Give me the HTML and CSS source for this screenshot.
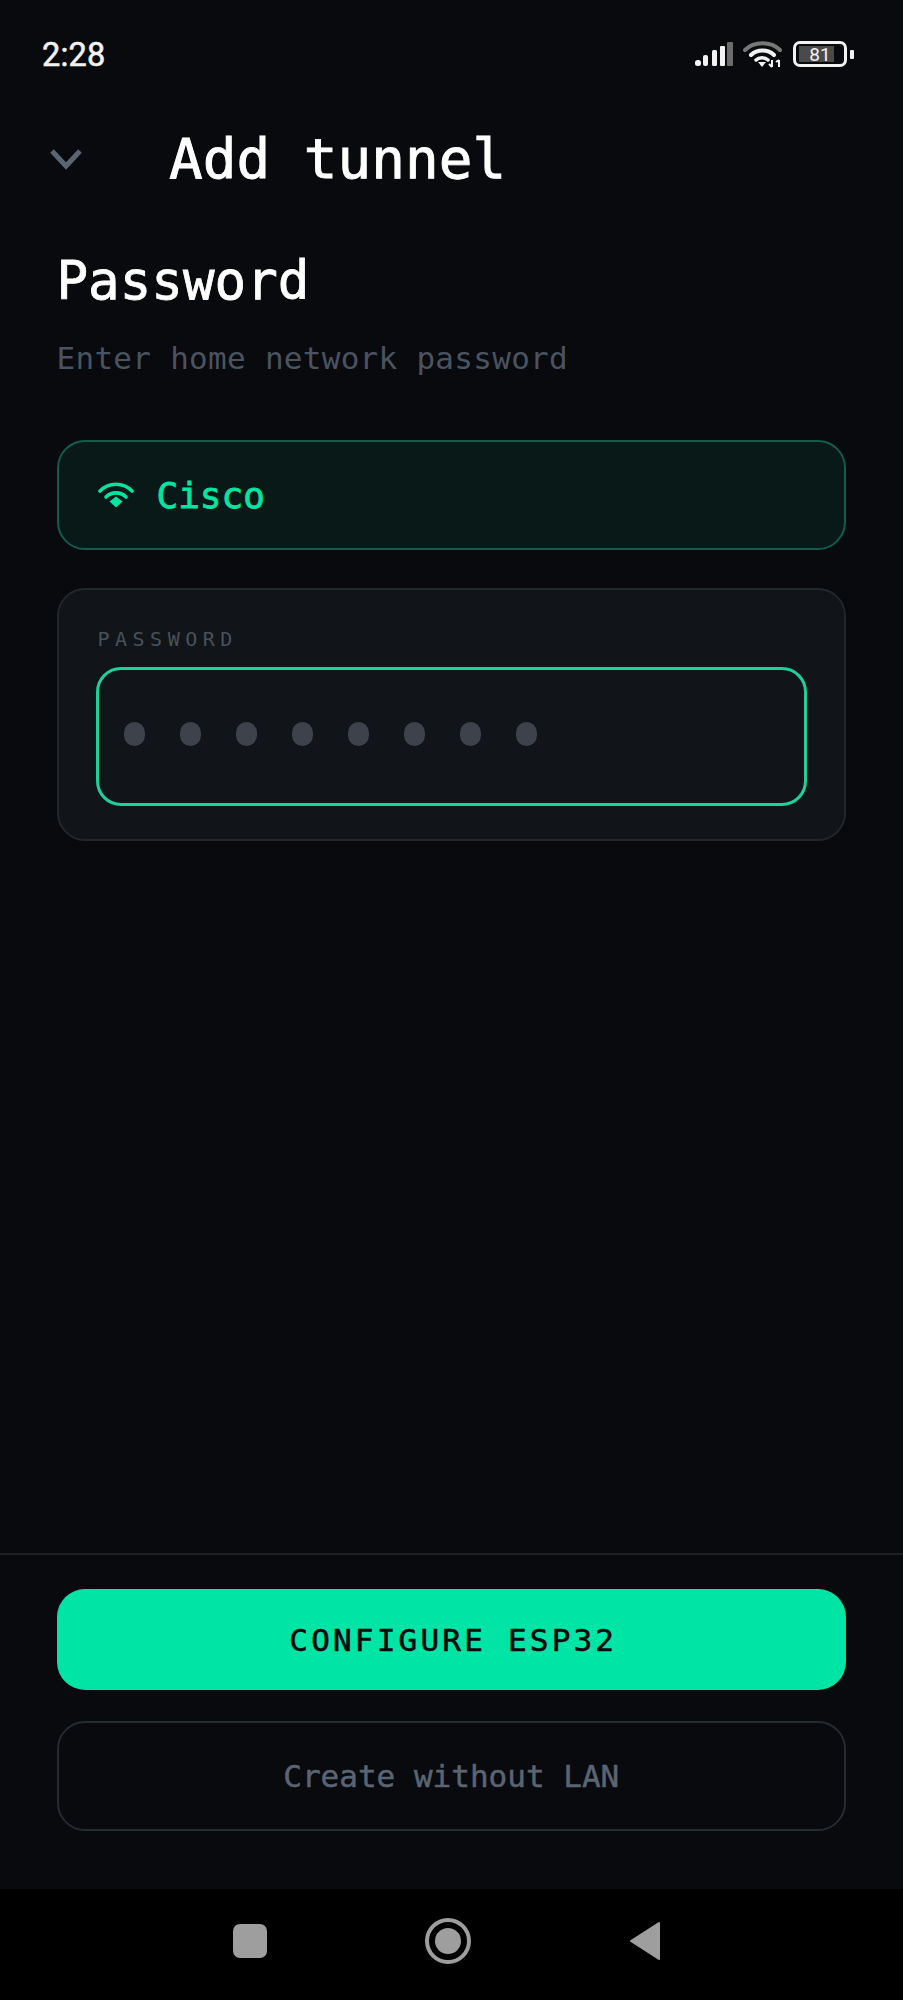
FILE: index.html
```html
<!DOCTYPE html>
<html>
  <head>
    <title>Add tunnel</title>
    <link rel="stylesheet" href="styles.css">
  </head>
  <body>
    <div class="statusbar">
      <span class="clock">2:28</span>
      <div class="status-icons">
        <svg class="signal" width="38" height="25" viewBox="0 0 38 25">
          <rect x="0" y="18" width="6" height="6" rx="2.500" fill="#f2f2f2"/>
          <rect x="8" y="13" width="5" height="11" rx="2" fill="#f2f2f2"/>
          <rect x="17" y="8" width="5" height="16" rx="1.500" fill="#f2f2f2"/>
          <rect x="25" y="4" width="5" height="20" rx="1" fill="#f2f2f2"/>
          <rect x="32" y="0" width="6" height="24" rx="1" fill="#6b6b6b"/>
        </svg>
        <svg class="wifi" width="40" height="28" viewBox="0 0 40 28">
          <path d="M2 10 C11 1 28 1 37 10" fill="none" stroke="#777" stroke-width="4" stroke-linecap="round"/>
          <path d="M8 15 C14 9 25 9 31 15" fill="none" stroke="#f2f2f2" stroke-width="4" stroke-linecap="round"/>
          <path d="M13 20 C16 17 22 17 25 20" fill="none" stroke="#f2f2f2" stroke-width="3.5" stroke-linecap="round"/>
          <path d="M15 22 H23 L19 27 Z" fill="#f2f2f2"/>
          <path d="M29 20 V27 M36 20 V27 M26 24 L29 27 M33 22 L36 20" fill="none" stroke="#f2f2f2" stroke-width="2"/>
        </svg>
        <div class="battery">
          <div class="battery-body">
            <div class="battery-fill"></div>
            <span class="battery-level">81</span>
          </div>
          <div class="battery-nib"></div>
        </div>
      </div>
    </div>

    <div class="screen">
      <div class="topbar">
        <svg class="back" width="34" height="22" viewBox="0 0 34 22">
          <path d="M3 3 L17 18 L31 3" fill="none" stroke="#5a6472" stroke-width="5"/>
        </svg>
        <h1>Add tunnel</h1>
      </div>

      <div class="content">
        <h2>Password</h2>
        <p class="hint">Enter home network password</p>

        <div class="network">
          <svg class="network-icon" width="36" height="26" viewBox="0 0 36 26">
            <path d="M2 9 C11 0 25 0 34 9" fill="none" stroke="#00e5a0" stroke-width="3.6" stroke-linecap="round"/>
            <path d="M8 15 C13 9.500 23 9.500 28 15" fill="none" stroke="#00e5a0" stroke-width="3.6" stroke-linecap="round"/>
            <path d="M11.500 19.500 L18 14.500 L24.500 19.500 L18 25.500 Z" fill="#00e5a0"/>
          </svg>
          <span class="network-name">Cisco</span>
        </div>

        <div class="card">
          <label class="field-label">PASSWORD</label>
          <div class="field">
            <span class="dot"></span>
            <span class="dot"></span>
            <span class="dot"></span>
            <span class="dot"></span>
            <span class="dot"></span>
            <span class="dot"></span>
            <span class="dot"></span>
            <span class="dot"></span>
          </div>
        </div>
      </div>

      <div class="actions">
        <button class="btn-primary">CONFIGURE ESP32</button>
        <button class="btn-ghost">Create without LAN</button>
      </div>
    </div>

    <div class="navbar">
      <div class="nav-square"></div>
      <div class="nav-home"><div class="nav-home-inner"></div></div>
      <svg class="nav-back" width="32" height="40" viewBox="0 0 32 40">
        <path d="M30 2 V38 L2 20 Z" fill="#9e9e9e" stroke="#9e9e9e" stroke-width="2" stroke-linejoin="round"/>
      </svg>
    </div>
  </body>
</html>
```

FILE: styles.css
```css
* {
  box-sizing: border-box;
}
body {
  margin: 0;
  width: 903px;
  height: 2000px;
  background-color: #090a0d;
  font-family: "DejaVu Sans Mono", monospace;
  display: flex;
  flex-direction: column;
}
.statusbar {
  height: 90px;
  padding: 37px 49px 0 42px;
  display: flex;
  justify-content: space-between;
  align-items: flex-start;
}
.clock {
  font-family: Roboto, sans-serif;
  font-size: 32.5px;
  font-weight: 400;
  line-height: 36px;
  letter-spacing: 0.2px;
  color: #f2f2f2;
  -webkit-text-stroke: 0.6px #f2f2f2;
}
.status-icons {
  display: flex;
  align-items: center;
  gap: 10px;
  height: 34px;
}
.battery {
  display: flex;
  align-items: center;
  gap: 3px;
}
.battery-body {
  position: relative;
  width: 54px;
  height: 26px;
  border: 3px solid #f2f2f2;
  border-radius: 7px;
  display: flex;
  align-items: center;
  justify-content: center;
}
.battery-fill {
  position: absolute;
  left: 3px;
  top: 2px;
  bottom: 2px;
  width: 35px;
  background-color: #4a4a4a;
}
.battery-level {
  position: relative;
  font-family: Roboto, sans-serif;
  font-size: 19px;
  font-weight: 400;
  color: #f2f2f2;
}
.battery-nib {
  width: 4px;
  height: 9px;
  background-color: #f2f2f2;
  border-radius: 1px;
}
.screen {
  flex: 1;
  display: flex;
  flex-direction: column;
}
.topbar {
  margin-top: 31px;
  height: 76px;
  padding-left: 49px;
  display: flex;
  align-items: center;
}
.back {
  margin-right: 86px;
}
h1 {
  margin: 0;
  font-size: 56px;
  font-weight: 400;
  color: #fff;
  line-height: 76px;
  -webkit-text-stroke: 0.9px #fff;
}
.content {
  flex: 1;
  padding: 0 57px 0 56.5px;
}
h2 {
  margin: 0;
  padding-top: 49px;
  font-size: 52.5px;
  font-weight: 400;
  line-height: 70px;
  color: #fff;
  -webkit-text-stroke: 0.8px #fff;
}
.hint {
  margin: 22px 0 0;
  font-size: 31px;
  line-height: 40px;
  letter-spacing: 0.28px;
  color: #4a5361;
}
.network {
  margin-top: 62px;
  height: 110px;
  background-color: #081918;
  border: 2px solid #125c4b;
  border-radius: 28px;
  padding-left: 39px;
  display: flex;
  align-items: center;
  gap: 23px;
}
.network-name {
  font-size: 36px;
  color: #00e5a0;
  -webkit-text-stroke: 0.8px #00e5a0;
}
.card {
  margin-top: 38px;
  height: 253px;
  background-color: #111519;
  border: 2px solid #23272c;
  border-radius: 28px;
  padding: 36px 37px 0;
}
.field-label {
  display: block;
  margin-left: 2px;
  font-size: 20px;
  line-height: 26px;
  letter-spacing: 5.5px;
  color: #4a5058;
}
.field {
  margin-top: 15px;
  height: 139px;
  border: 3px solid #1fd09b;
  border-radius: 25px;
  padding: 0 0 6px 25px;
  display: flex;
  align-items: center;
  gap: 35.1px;
}
.dot {
  width: 21px;
  height: 24px;
  border-radius: 11px;
  background-color: #3d424b;
}
.actions {
  border-top: 2px solid #1d2127;
  padding: 34px 57px 0 56.5px;
  height: 336px;
  display: flex;
  flex-direction: column;
  gap: 31px;
}
.btn-primary {
  height: 101px;
  border: none;
  border-radius: 28px;
  padding-left: 10px;
  background-color: #00e5a5;
  font-family: "DejaVu Sans Mono", monospace;
  font-size: 31px;
  letter-spacing: 3.2px;
  color: #050a0c;
  -webkit-text-stroke: 0.6px #050a0c;
}
.btn-ghost {
  height: 110px;
  border: 2px solid #262a31;
  border-radius: 28px;
  background-color: transparent;
  font-family: "DejaVu Sans Mono", monospace;
  font-size: 31px;
  color: #5a6472;
  -webkit-text-stroke: 0.5px #5a6472;
}
.navbar {
  height: 111px;
  flex-shrink: 0;
  background-color: #000;
  padding-bottom: 8px;
  display: flex;
  align-items: center;
}
.nav-square {
  margin-left: 233px;
  width: 34px;
  height: 34px;
  border-radius: 7px;
  background-color: #9e9e9e;
}
.nav-home {
  margin-left: 158px;
  width: 46px;
  height: 46px;
  border: 4px solid #9e9e9e;
  border-radius: 50%;
  display: flex;
  align-items: center;
  justify-content: center;
}
.nav-home-inner {
  width: 26px;
  height: 26px;
  border-radius: 50%;
  background-color: #9e9e9e;
}
.nav-back {
  margin-left: 158px;
}
```
